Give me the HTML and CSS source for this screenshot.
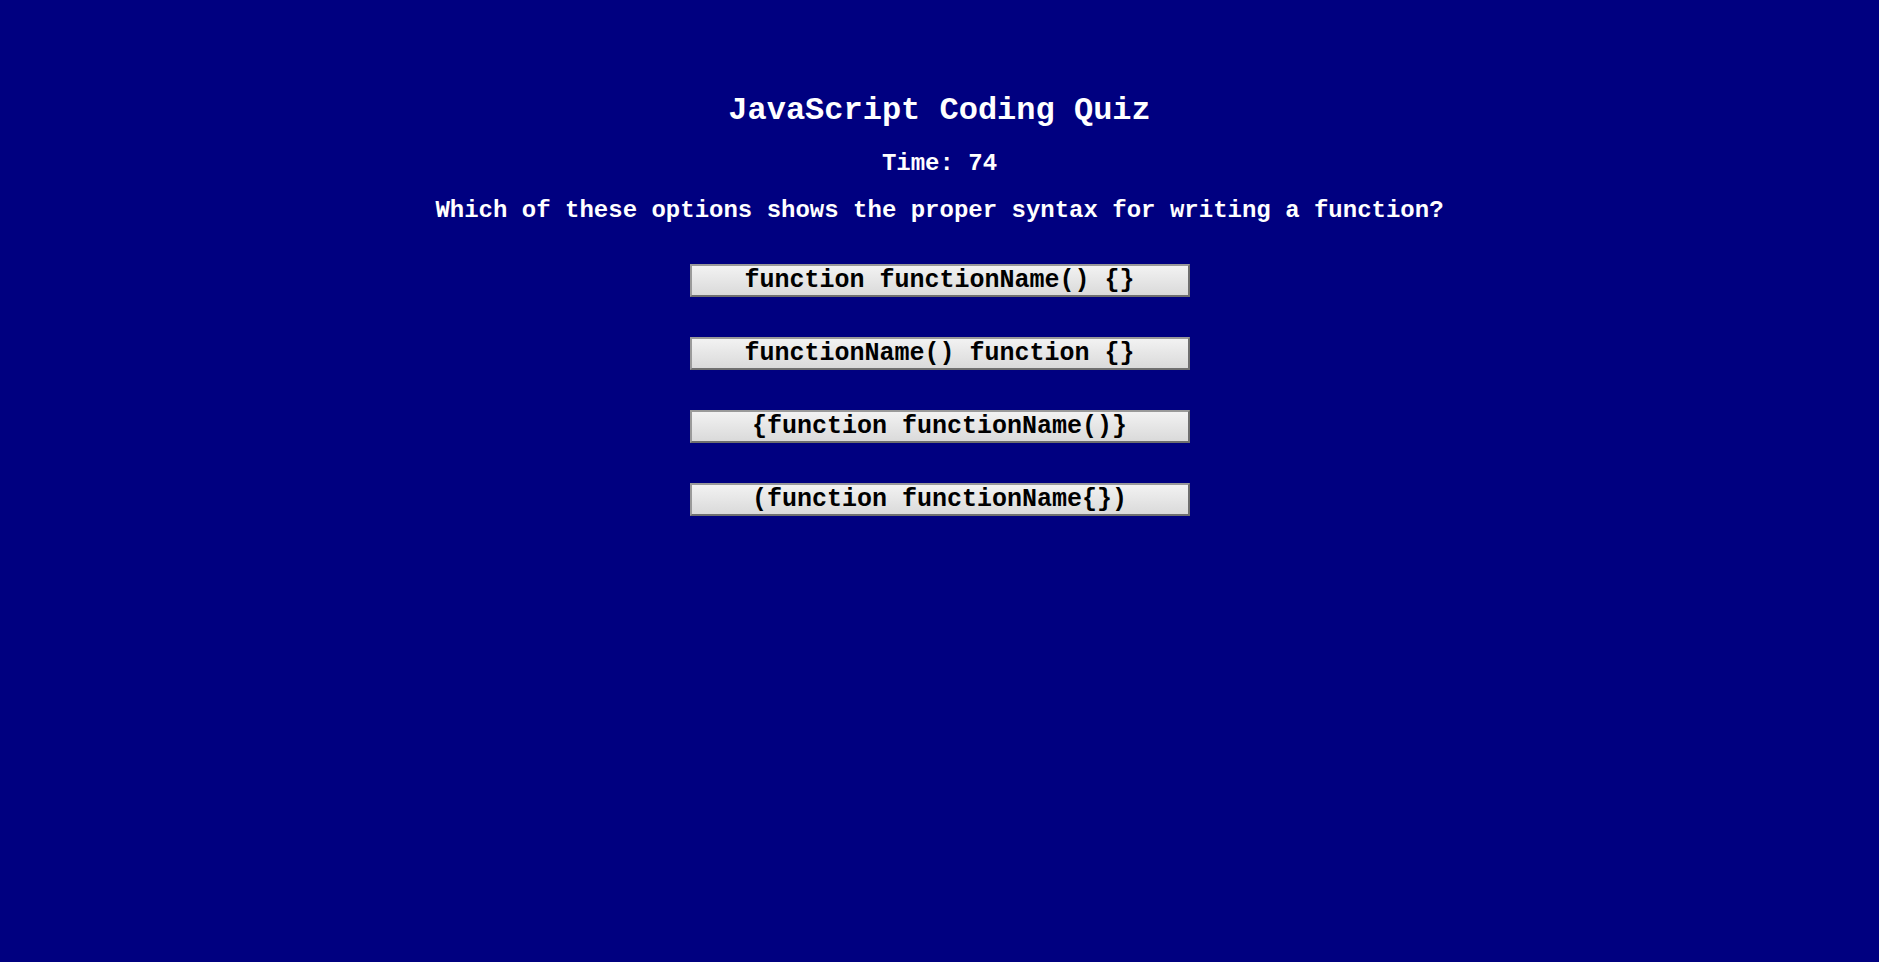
FILE: index.html
```html
<!DOCTYPE html>
<html lang="en">
<head>
<meta charset="utf-8">
<title>JavaScript Coding Quiz</title>
<link rel="stylesheet" href="styles.css">
</head>
<body>
  <main class="quiz">
    <h1 class="quiz-title">JavaScript Coding Quiz</h1>
    <h2 class="quiz-timer">Time: 74</h2>
    <h3 class="quiz-question">Which of these options shows the proper syntax for writing a function?</h3>
    <div class="choices">
      <button class="choice">function functionName() {}</button>
      <button class="choice">functionName() function {}</button>
      <button class="choice">{function functionName()}</button>
      <button class="choice">(function functionName{})</button>
    </div>
  </main>
</body>
</html>
```
FILE: styles.css
```css
html, body {
  margin: 0;
  padding: 0;
  height: 100%;
}

body {
  background: #000080;
  color: #ffffff;
  font-family: "Liberation Mono", "Courier New", monospace;
  font-weight: bold;
}

.quiz {
  display: flex;
  flex-direction: column;
  align-items: center;
  text-align: center;
  padding-top: 93px;
}

.quiz-title {
  margin: 0;
  font-size: 32px;
  line-height: 36px;
}

.quiz-timer {
  margin: 21px 0 0;
  font-size: 24px;
  line-height: 28px;
}

.quiz-question {
  margin: 19px 0 0;
  font-size: 24px;
  line-height: 28px;
}

.choices {
  display: flex;
  flex-direction: column;
  align-items: center;
  gap: 40px;
  margin-top: 39px;
}

.choice {
  box-sizing: border-box;
  width: 500px;
  height: 33px;
  padding: 0;
  font-family: "Liberation Mono", "Courier New", monospace;
  font-weight: bold;
  font-size: 25px;
  line-height: 29px;
  color: #000000;
  background: linear-gradient(#f2f2f2, #dadada);
  border: 2px solid;
  border-color: #9a9a9a #6f6f6f #6f6f6f #9a9a9a;
  border-radius: 0;
  cursor: pointer;
}
```
